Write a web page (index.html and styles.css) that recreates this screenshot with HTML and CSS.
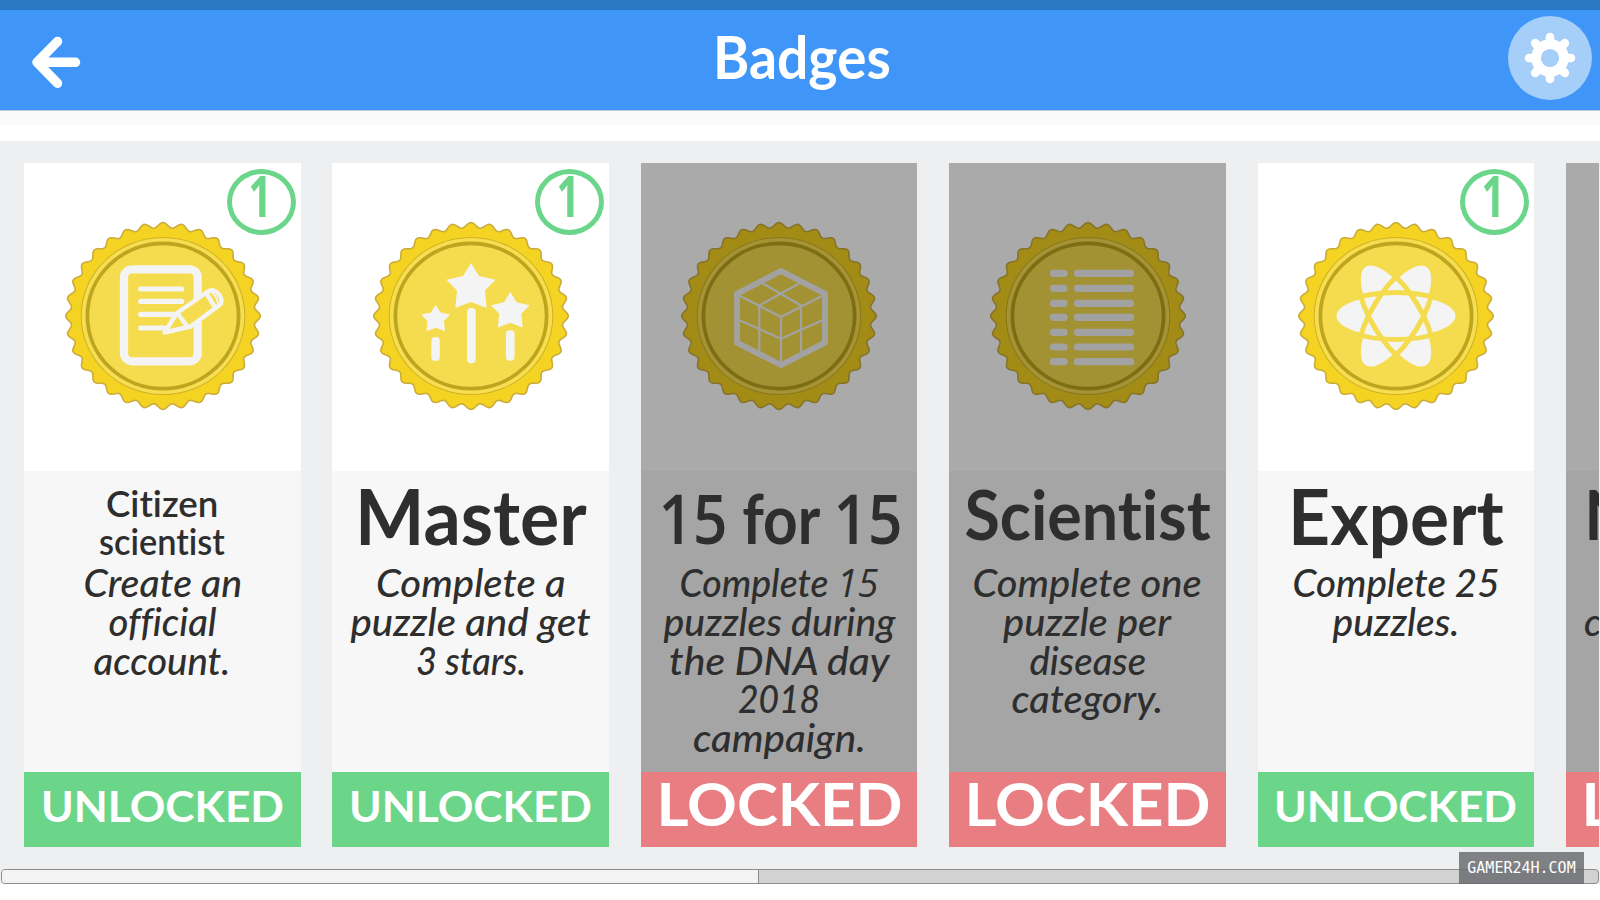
FILE: index.html
```
<!DOCTYPE html>
<html lang="en">

<head>
    <meta charset="utf-8">
    <title>Badges</title>
    <link rel="stylesheet" href="styles.css">
</head>

<body>
    <svg class="defs" width="0" height="0">
        <defs>
            <g id="medal">
                <path id="medal-edge" class="medal-edge" />
                <circle class="medal-shadow" r="82.3" />
                <circle class="medal-rim" r="81.3" />
                <circle class="medal-ring" r="75.6" />
            </g>
            <path id="star" d="M0-53 8-40 24.5-36.3 14-25.5 15.7-8 0-14-15.7-8-14-25.5-24.5-36.3-8-40z" />
        </defs>
    </svg>

    <div class="statusBar"></div>
    <header class="header">
        <svg class="backIcon" viewBox="0 0 60 60" width="60" height="60">
            <path d="M31.5 9.5 11 30.3 31.5 51.3M14 30.3H49.5" />
        </svg>
        <h1 class="headerTitle"><span data-w="178">Badges</span></h1>
        <div class="settings">
            <svg id="gear" class="gearIcon" viewBox="-26 -26 52 52" width="52" height="52">
                <circle r="13.9" />
            </svg>
        </div>
    </header>
    <div class="subBar"></div>

    <main class="page">
        <div class="badgeList">
            <section class="badge">
                <div class="picture">
                    <div class="count"><span>1</span></div>
                    <svg class="medal" viewBox="-100 -96 200 192">
                        <use href="#medal" transform="scale(1 .96)" />
                        <rect class="line" x="-39" y="-46.7" width="73.7" height="92" rx="8" stroke-width="8.2" />
                        <path class="line" d="M-22.3-27H18.7M-22.3-14.7H18.7M-22.3-1.7H10M-22.3 12H1" stroke-width="5.2" />
                        <path class="line pencil" d="M1.5 16.5 14-3 45-24.5Q50-28 56-21.5 61-14 56-10.5L27.5 10.5zM15-2 24 10M44.5-21 51.5-9.5" stroke-width="4.4" />
                        <path class="line" d="M48-24Q54-20 55-12" stroke-width="2" />
                    </svg>
                </div>
                <div class="info">
                    <h2 class="title small"><span data-w="112">Citizen</span><span data-w="126">scientist</span></h2>
                    <p class="desc"><span data-w="159">Create an</span><span data-w="108">official</span><span data-w="137">account.</span></p>
                </div>
                <div class="state unlocked"><span data-w="243">UNLOCKED</span></div>
            </section>

            <section class="badge">
                <div class="picture">
                    <div class="count"><span>1</span></div>
                    <svg class="medal" viewBox="-100 -96 200 192">
                        <use href="#medal" transform="scale(1 .96)" />
                        <g class="solid">
                            <use href="#star" />
                            <use href="#star" transform="translate(-35.3 20) scale(.59)" />
                            <use href="#star" transform="translate(39.3 17.9) scale(.79)" />
                            <rect x="-4" y="-8" width="8.7" height="55.3" rx="4" />
                            <rect x="-39.7" y="21" width="8.5" height="24" rx="4" />
                            <rect x="34.9" y="14.3" width="8.7" height="30.5" rx="4" />
                        </g>
                    </svg>
                </div>
                <div class="info">
                    <h2 class="title"><span data-w="232">Master</span></h2>
                    <p class="desc"><span data-w="189">Complete a</span><span data-w="240">puzzle and get</span><span data-w="110">3 stars.</span></p>
                </div>
                <div class="state unlocked"><span data-w="243">UNLOCKED</span></div>
            </section>

            <section class="badge dim">
                <div class="picture">
                    <svg class="medal" viewBox="-100 -96 200 192">
                        <use href="#medal" transform="scale(1 .96)" />
                        <path class="line miter" d="M2-45 46-22.3V26.7L2 49-42 26.7V-22.3z" stroke-width="5.8" />
                        <path class="line" d="M2 1V47M-40-20.5 2 1 44-20.5M-19.7-10.5V36M22-10.5V36M-40 4 2 22.7 44 4M-19.7-10.5 20-32.5M22-10.5-16-32.5" stroke-width="2.1" />
                    </svg>
                </div>
                <div class="info">
                    <h2 class="title numeric"><span data-w="244"><i class="num">15</i> for <i class="num">15</i></span></h2>
                    <p class="desc"><span data-w="199">Complete <i class="num">15</i></span><span data-w="232">puzzles during</span><span data-w="221">the DNA day</span><span data-w="82">2018</span><span data-w="173">campaign.</span></p>
                </div>
                <div class="state locked"><span data-w="246">LOCKED</span></div>
            </section>

            <section class="badge dim">
                <div class="picture">
                    <svg class="medal" viewBox="-100 -96 200 192">
                        <use href="#medal" transform="scale(1 .96)" />
                        <path class="line" d="M-34.5-42.7H-24M-34.5-27.7H-24M-34.5-12.7H-24M-34.5 1.3H-24M-34.5 16.3H-24M-34.5 31H-24M-34.5 45.7H-24" stroke-width="7.2" />
                        <path class="line" d="M-10.5-42.7H42.5M-10.5-27.7H42.5M-10.5-12.7H42.5M-10.5 1.3H42.5M-10.5 16.3H42.5M-10.5 31H42.5M-10.5 45.7H42.5" stroke-width="7.2" />
                    </svg>
                </div>
                <div class="info">
                    <h2 class="title medium"><span data-w="246">Scientist</span></h2>
                    <p class="desc"><span data-w="229">Complete one</span><span data-w="168">puzzle per</span><span data-w="117">disease</span><span data-w="152">category.</span></p>
                </div>
                <div class="state locked"><span data-w="246">LOCKED</span></div>
            </section>

            <section class="badge">
                <div class="picture">
                    <div class="count"><span>1</span></div>
                    <svg class="medal" viewBox="-100 -96 200 192">
                        <use href="#medal" transform="scale(1 .96)" />
                        <g transform="scale(1 .96)">
                            <g class="solid">
                                <ellipse rx="62" ry="24.5" />
                                <ellipse rx="62" ry="24.5" transform="rotate(60)" />
                                <ellipse rx="62" ry="24.5" transform="rotate(120)" />
                            </g>
                            <g class="orbits">
                                <ellipse rx="62" ry="24.5" />
                                <ellipse rx="62" ry="24.5" transform="rotate(60)" />
                                <ellipse rx="62" ry="24.5" transform="rotate(120)" />
                            </g>
                        </g>
                    </svg>
                </div>
                <div class="info">
                    <h2 class="title"><span data-w="216">Expert</span></h2>
                    <p class="desc"><span data-w="207">Complete 25</span><span data-w="127">puzzles.</span></p>
                </div>
                <div class="state unlocked"><span data-w="243">UNLOCKED</span></div>
            </section>

            <section class="badge dim partial">
                <div class="picture"></div>
                <div class="info">
                    <h2 class="title medium"><span>N</span></h2>
                    <p class="desc"><span>&nbsp;</span><span>c</span></p>
                </div>
                <div class="state locked"><span data-w="246">LOCKED</span></div>
            </section>
        </div>
        <div class="scrollbar">
            <div class="thumb"></div>
        </div>
    </main>
    <div class="watermark">GAMER24H.COM</div>

    <script src="script.js"></script>
</body>

</html>
```
FILE: styles.css
```
* {
    box-sizing: border-box;
}

body {
    margin: 0;
    height: 900px;
    overflow: hidden;
    background-color: #fff;
    color: #2e2e2e;
    font-family: Lato, "Liberation Sans", sans-serif;
    font-variant-ligatures: none;
}

h1,
h2,
p {
    margin: 0;
}

.defs {
    display: block;
}

.statusBar {
    height: 10px;
    background-color: #2878c3;
}

.header {
    display: flex;
    align-items: center;
    justify-content: space-between;
    height: 100px;
    padding: 0 8px 0 26px;
    background-color: #3f96f8;
}

.backIcon {
    margin-top: 4px;
}

.backIcon path {
    fill: none;
    stroke: #fff;
    stroke-width: 9.5;
    stroke-linecap: round;
    stroke-linejoin: round;
}

.headerTitle {
    padding-left: 9px;
    margin-top: -7px;
    font-size: 59px;
    font-weight: bold;
    line-height: 70px;
    color: #fff;
}

.headerTitle span {
    display: inline-block;
}

.settings {
    display: flex;
    align-items: center;
    justify-content: center;
    width: 84px;
    height: 84px;
    margin-top: -4px;
    border-radius: 50%;
    background-color: #a5cef9;
}

.gearIcon {
    fill: none;
    stroke: #fff;
    stroke-width: 9.6;
}

.gearIcon line {
    stroke-width: 8.6;
    stroke-linecap: round;
}

.subBar {
    height: 15px;
    border-top: 1px solid #c3c9d0;
    background-color: #fafafa;
}

.page {
    height: 743px;
    margin-top: 16px;
    padding-top: 22px;
    background-color: #edeff1;
}

.badgeList {
    display: flex;
    gap: 31.7px;
    width: 1598.5px;
    height: 684px;
    padding-left: 24px;
    overflow: hidden;
}

.badge {
    display: flex;
    flex: none;
    flex-direction: column;
    width: 276.7px;
}

.picture {
    position: relative;
    flex: none;
    height: 308px;
    padding: 57px 0 0 38.5px;
    background-color: #fff;
}

.dim .picture::after {
    content: "";
    position: absolute;
    inset: 0;
    background-color: rgba(0, 0, 0, .333);
}

.count {
    position: absolute;
    top: 6px;
    right: 5px;
    display: flex;
    justify-content: center;
    width: 69px;
    height: 66px;
    border: 5px solid #6bd68a;
    border-radius: 50%;
    color: #6bd68a;
    font-family: "Open Sans", "Liberation Sans", sans-serif;
    font-size: 57px;
    font-weight: bold;
    line-height: 43px;
}

.count span {
    transform: translateX(-1px) scaleX(.72);
}

.medal {
    display: block;
    width: 200px;
    height: 192px;
}

.medal-edge {
    fill: #f5d322;
    stroke: #c9ac3c;
    stroke-width: 1.6;
}

.medal-shadow {
    fill: #cfb128;
}

.medal-rim {
    fill: #f6de50;
}

.medal-ring {
    fill: #f5dc4f;
    stroke: #bfa41f;
    stroke-width: 3.8;
}

.line {
    fill: none;
    stroke: #f4f4f4;
    stroke-linecap: round;
    stroke-linejoin: round;
}

.line.miter {
    stroke-linejoin: miter;
}

.line.pencil {
    fill: #f5dc4f;
}

.solid {
    fill: #f4f4f5;
}

.orbits {
    fill: none;
    stroke: #f5dc4f;
    stroke-width: 5;
}

.info {
    flex: 1;
    background-color: #f7f7f7;
    text-align: center;
}

.dim .info {
    background-color: #a5a5a5;
}

.title {
    height: 92px;
    padding-top: 7px;
    font-size: 76px;
    font-weight: bold;
    line-height: 76px;
}

.title.small {
    padding-top: 13px;
    font-size: 36px;
    font-weight: 600;
    line-height: 38px;
}

.title.medium {
    padding-top: 5px;
    font-size: 68px;
}

.title.numeric {
    padding-top: 9px;
    font-size: 69px;
}

.title span,
.desc span {
    display: block;
    width: max-content;
    margin: 0 auto;
    white-space: nowrap;
}

.num {
    font-family: "Open Sans", "Liberation Sans", sans-serif;
    font-style: inherit;
    line-height: 1;
}

.title .num {
    font-weight: 600;
}

.desc {
    font-size: 38px;
    font-style: italic;
    font-weight: 500;
    line-height: 38.8px;
}

.state {
    flex: none;
    display: flex;
    justify-content: center;
    height: 75px;
    color: #fff;
    font-weight: bold;
}

.unlocked {
    padding-top: 12.5px;
    background-color: #6bd68a;
    font-size: 42px;
    line-height: 42px;
}

.locked {
    padding-top: 1.5px;
    background-color: #e87e82;
    font-size: 59px;
    line-height: 59px;
}

.partial .title span,
.partial .desc span {
    margin-left: 18px;
}

.scrollbar {
    height: 15px;
    margin: 22px 1px 0;
    border: 1px solid #8c8c8c;
    border-radius: 4px;
    background-color: #d2d2d2;
}

.thumb {
    width: 757px;
    height: 13px;
    border-right: 1px solid #8c8c8c;
    border-radius: 3px 0 0 3px;
    background-color: #f3f3f3;
}

.watermark {
    position: absolute;
    top: 852px;
    left: 1459px;
    width: 125px;
    height: 32px;
    background-color: rgba(103, 105, 108, .82);
    color: #fff;
    font-family: "DejaVu Sans Mono", monospace;
    font-size: 15px;
    line-height: 32px;
    text-align: center;
}
```
FILE: script.js
```
(function () {
    var i, angle, radius;

    // wavy outer edge shared by all the medals
    var points = [];
    for (i = 0; i < 384; i++) {
        angle = i * Math.PI / 192;
        radius = 94.6 + 2.7 * Math.cos(angle * 32);
        points.push((radius * Math.sin(angle)).toFixed(2) + " " + (-radius * Math.cos(angle)).toFixed(2));
    }
    document.getElementById("medal-edge").setAttribute("d", "M" + points.join("L") + "z");

    // gear teeth
    var gear = document.getElementById("gear");
    for (i = 0; i < 8; i++) {
        var tooth = document.createElementNS("http://www.w3.org/2000/svg", "line");
        tooth.setAttribute("y1", -15);
        tooth.setAttribute("y2", -21);
        tooth.setAttribute("transform", "rotate(" + i * 45 + ")");
        gear.appendChild(tooth);
    }

    // fit each text line to its width
    [].forEach.call(document.querySelectorAll("span[data-w]"), function (line) {
        line.style.transform = "scaleX(" + line.getAttribute("data-w") / line.offsetWidth + ")";
    });
})();
```
